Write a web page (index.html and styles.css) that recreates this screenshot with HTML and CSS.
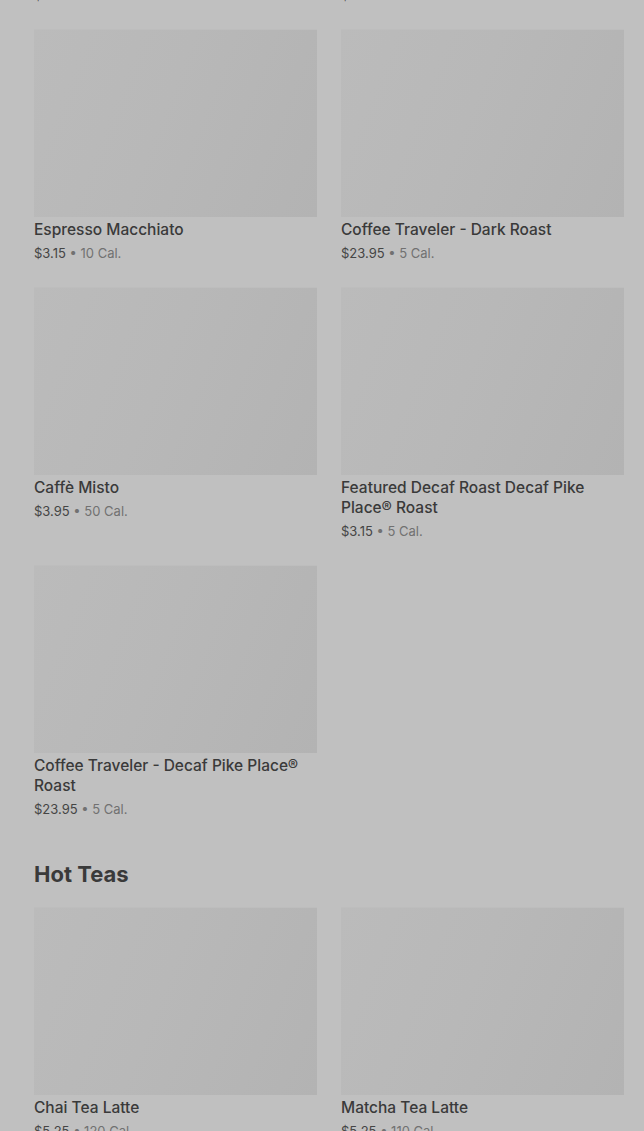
FILE: index.html
```html
<!DOCTYPE html>
<html lang="en">
<head>
  <meta charset="UTF-8">
  <title>Menu - Brewed Coffee</title>
  <meta name="viewport" content="width=device-width, initial-scale=1.0">
  <link rel="stylesheet" href="styles.css">
</head>
<body>

  <div class="menu">
    <section class="category">
      <div class="grid scrolled">
        <div class="item">
          <div class="thumb"></div>
          <h3>Caffè Americano</h3>
          <p class="meta"><span class="price">$3.45</span> • 15 Cal.</p>
        </div>
        <div class="item">
          <div class="thumb"></div>
          <h3>Blonde Roast</h3>
          <p class="meta"><span class="price">$2.95</span> • 5 Cal.</p>
        </div>

        <div class="item">
          <div class="thumb"></div>
          <h3>Espresso Macchiato</h3>
          <p class="meta"><span class="price">$3.15</span> • 10 Cal.</p>
        </div>
        <div class="item">
          <div class="thumb"></div>
          <h3>Coffee Traveler - Dark Roast</h3>
          <p class="meta"><span class="price">$23.95</span> • 5 Cal.</p>
        </div>

        <div class="item">
          <div class="thumb"></div>
          <h3>Caffè Misto</h3>
          <p class="meta"><span class="price">$3.95</span> • 50 Cal.</p>
        </div>
        <div class="item">
          <div class="thumb"></div>
          <h3>Featured Decaf Roast Decaf Pike Place® Roast</h3>
          <p class="meta"><span class="price">$3.15</span> • 5 Cal.</p>
        </div>

        <div class="item">
          <div class="thumb"></div>
          <h3>Coffee Traveler - Decaf Pike Place® Roast</h3>
          <p class="meta"><span class="price">$23.95</span> • 5 Cal.</p>
        </div>
      </div>
    </section>

    <section class="category">
      <h2>Hot Teas</h2>
      <div class="grid">
        <div class="item">
          <div class="thumb"></div>
          <h3>Chai Tea Latte</h3>
          <p class="meta"><span class="price">$5.25</span> • 120 Cal.</p>
        </div>
        <div class="item">
          <div class="thumb"></div>
          <h3>Matcha Tea Latte</h3>
          <p class="meta"><span class="price">$5.25</span> • 110 Cal.</p>
        </div>
      </div>
    </section>
  </div>

</body>
</html>
```

FILE: styles.css
```css
body {
  font-family: Inter, 'Noto Sans', sans-serif;
  background-color: #c0c0c0;
  color: #3b3b3b;
  margin: 0;
  padding: 0;
  overflow: hidden;
}
.menu {
  padding: 0 20px 0 34px;
}
.grid {
  display: grid;
  grid-template-columns: 283px 283px;
  column-gap: 24px;
  row-gap: 24px;
}
/* page is scrolled part way into the coffee list */
.grid.scrolled {
  margin-top: -229px;
}
.thumb {
  height: 188px;
  background: linear-gradient(112deg, #bbbbbb 0%, #b8b8b8 45%, #b3b3b3 100%);
  box-shadow: inset 0 1px 0 #bdbdbd;
}
.item h3 {
  font-size: 15.5px;
  font-weight: 500;
  line-height: 20px;
  margin: 3px 0 0;
  color: #3a3a3a;
}
.meta {
  font-size: 13px;
  line-height: 20px;
  margin: 3px 0 0;
  color: #717171;
}
.price {
  color: #454545;
}
.category h2 {
  font-size: 22px;
  font-weight: 700;
  line-height: 32px;
  margin: 39px 0 17px;
  color: #3a3a3a;
}
```
